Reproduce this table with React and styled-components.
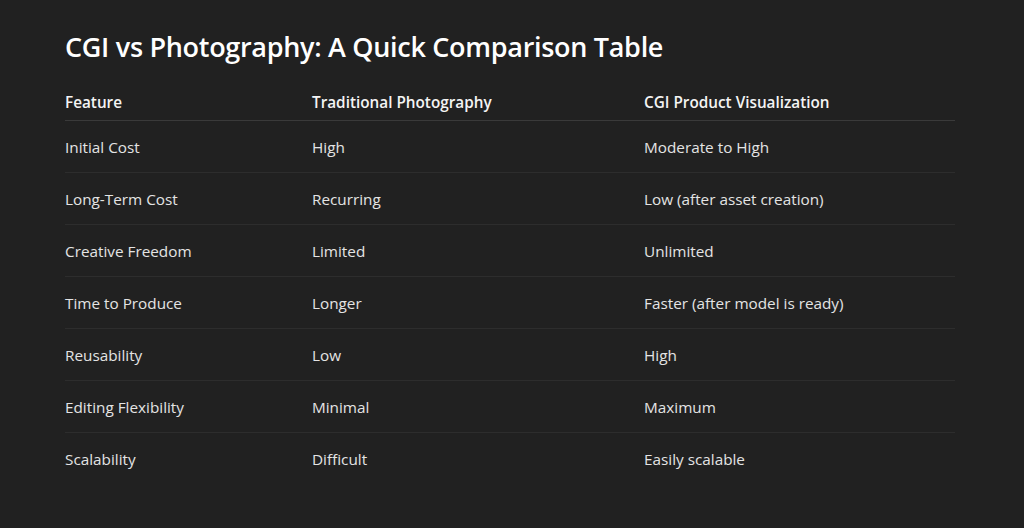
import React from 'react';
import styled, { createGlobalStyle } from 'styled-components';

const Global = createGlobalStyle`
  html, body {margin: 0; padding: 0; background: #212121;}
  body {font-family: "Open Sans", "Noto Sans", sans-serif; color: #e8e8e8;}
`;

const Page = styled.main`
  padding: 30px 65px 40px;
  min-height: 528px;
  box-sizing: border-box;
`;

const Title = styled.h2`
  margin: 0 0 20px;
  font-size: 27px;
  line-height: 34px;
  font-weight: 600;
  color: #ffffff;
  letter-spacing: -0.3px;
`;

const Table = styled.div`
  width: 890px;
`;

const Row = styled.div`
  display: grid;
  grid-template-columns: 247px 332px 1fr;
  align-items: center;
  height: ${p => (p.head ? '36px' : '51px')};
  border-bottom: ${p => (p.last ? 'none' : p.head ? '1px solid #3a3a3a' : '1px solid #2d2d2d')};
`;

const Cell = styled.div`
  font-size: 15.3px;
  line-height: 22px;
  font-weight: ${p => (p.head ? 600 : 400)};
  color: ${p => (p.head ? '#f4f4f4' : '#e4e4e4')};
`;

const rows = [
  ['Initial Cost', 'High', 'Moderate to High'],
  ['Long-Term Cost', 'Recurring', 'Low (after asset creation)'],
  ['Creative Freedom', 'Limited', 'Unlimited'],
  ['Time to Produce', 'Longer', 'Faster (after model is ready)'],
  ['Reusability', 'Low', 'High'],
  ['Editing Flexibility', 'Minimal', 'Maximum'],
  ['Scalability', 'Difficult', 'Easily scalable'],
];

export default function App() {
  return (
    <>
      <Global />
      <Page>
        <Title>CGI vs Photography: A Quick Comparison Table</Title>
        <Table>
          <Row head>
            <Cell head>Feature</Cell>
            <Cell head>Traditional Photography</Cell>
            <Cell head>CGI Product Visualization</Cell>
          </Row>
          {rows.map((r, i) => (
            <Row key={r[0]} last={i === rows.length - 1}>
              {r.map(c => <Cell key={c}>{c}</Cell>)}
            </Row>
          ))}
        </Table>
      </Page>
    </>
  );
}
